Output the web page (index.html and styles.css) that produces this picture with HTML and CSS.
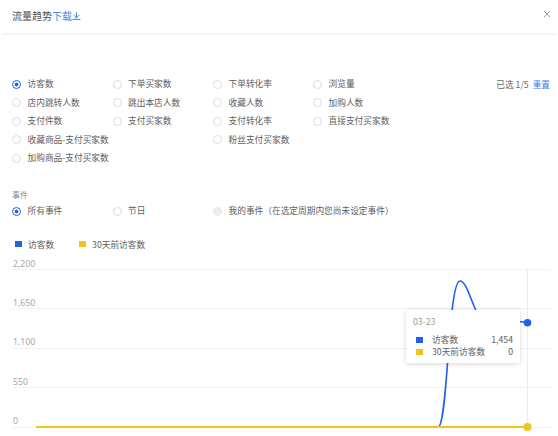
FILE: index.html
```html
<!DOCTYPE html>
<html lang="zh-CN">
<head>
<meta charset="utf-8">
<link rel="stylesheet" href="styles.css">
</head>
<body>
<div class="modal">
  <header class="hd">
    <span class="title">流量趋势</span>
    <a class="dl">下载<svg class="dl-ico" width="9" height="8" viewBox="0 0 9 8"><path d="M4.5 0.3V5.6M1.6 3L4.5 5.9L7.4 3M0.6 7.4H8.4" fill="none" stroke="#3f7ff0" stroke-width="1"/></svg></a>
    <svg class="close" width="8" height="8" viewBox="0 0 8 8"><path d="M1 1L7 7M7 1L1 7" stroke="#9a9a9a" stroke-width="1"/></svg>
  </header>

  <section class="metrics">
    <div class="grid">
      <label class="opt"><i class="rd on"></i>访客数</label>
      <label class="opt"><i class="rd"></i>下单买家数</label>
      <label class="opt"><i class="rd"></i>下单转化率</label>
      <label class="opt"><i class="rd"></i>浏览量</label>
      <label class="opt"><i class="rd"></i>店内跳转人数</label>
      <label class="opt"><i class="rd"></i>跳出本店人数</label>
      <label class="opt"><i class="rd"></i>收藏人数</label>
      <label class="opt"><i class="rd"></i>加购人数</label>
      <label class="opt"><i class="rd"></i>支付件数</label>
      <label class="opt"><i class="rd"></i>支付买家数</label>
      <label class="opt"><i class="rd"></i>支付转化率</label>
      <label class="opt"><i class="rd"></i>直接支付买家数</label>
      <label class="opt"><i class="rd"></i>收藏商品-支付买家数</label>
      <span></span>
      <label class="opt"><i class="rd"></i>粉丝支付买家数</label>
      <span></span>
      <label class="opt"><i class="rd"></i>加购商品-支付买家数</label>
    </div>
    <div class="sel">已选 1/5 <a class="reset">重置</a></div>
  </section>

  <section class="events">
    <div class="ev-label">事件</div>
    <div class="ev-row">
      <label class="opt"><i class="rd on"></i>所有事件</label>
      <label class="opt"><i class="rd"></i>节日</label>
      <label class="opt wide"><i class="rd dis"></i>我的事件（在选定周期内您尚未设定事件）</label>
    </div>
  </section>

  <div class="legend">
    <span class="lg"><i class="sq blue"></i>访客数</span>
    <span class="lg"><i class="sq yellow"></i>30天前访客数</span>
  </div>

  <div class="chart">
    <svg class="plot" width="558" height="184" viewBox="0 252 558 184">
      <g stroke="#f1f1f5" stroke-width="1">
        <line x1="13" y1="269.5" x2="550" y2="269.5"/>
        <line x1="13" y1="308.5" x2="550" y2="308.5"/>
        <line x1="13" y1="348.5" x2="550" y2="348.5"/>
        <line x1="13" y1="387.5" x2="550" y2="387.5"/>
        <line x1="13" y1="427.5" x2="550" y2="427.5"/>
      </g>
      <g class="ylab" fill="#a6a6a6">
        <text x="13" y="266.5">2,200</text>
        <text x="13" y="305.5">1,650</text>
        <text x="13" y="345">1,100</text>
        <text x="13" y="384.5">550</text>
        <text x="13" y="423.5">0</text>
      </g>
      <line x1="527.5" y1="269" x2="527.5" y2="427" stroke="#ececf0" stroke-width="1"/>
      <path d="M36 427H438C448 427 448 281 460 281C466 281 470 298 477 313C484 326 500 318 527.5 322.7" fill="none" stroke="#2160e8" stroke-width="1.6"/>
      <line x1="36" y1="427" x2="527.5" y2="427" stroke="#f0c419" stroke-width="2"/>
      <circle cx="527.5" cy="322.7" r="3.8" fill="#2160e8"/>
      <circle cx="527.5" cy="427" r="4" fill="#f0c419"/>
    </svg>
    <div class="tip">
      <div class="tip-date">03-23</div>
      <div class="tip-row"><i class="sq blue"></i><span class="tip-name">访客数</span><span class="tip-val">1,454</span></div>
      <div class="tip-row"><i class="sq yellow"></i><span class="tip-name">30天前访客数</span><span class="tip-val">0</span></div>
    </div>
  </div>
</div>
</body>
</html>
```

FILE: styles.css
```css
* { box-sizing: border-box; }
html, body {
  margin: 0;
  padding: 0;
  background: #fff;
}
body {
  width: 558px;
  height: 436px;
  overflow: hidden;
  font-family: "Noto Sans CJK SC", "Noto Sans", sans-serif;
  font-size: 8.7px;
  color: #606060;
}
.modal { width: 558px; }

.hd {
  height: 35px;
  margin: 0 3px 0 2px;
  padding: 0 4px 0 10px;
  border-bottom: 2px solid #f4f4f4;
  display: flex;
  align-items: center;
  font-size: 10px;
  line-height: 14px;
  padding-bottom: 2px;
}
.title { color: #4d4d4d; }
.dl {
  color: #3f7ff0;
  display: inline-flex;
  align-items: center;
}
.dl-ico { margin-left: 0; margin-top: 1px; }
.close { margin-left: auto; margin-top: -3px; }

.metrics {
  margin-top: 40px;
  display: flex;
  align-items: flex-start;
}
.grid {
  padding-left: 12px;
  display: grid;
  grid-template-columns: 100.5px 100.5px 100px 100px;
  grid-auto-rows: 18.5px;
}
.opt {
  display: flex;
  align-items: center;
  gap: 6.5px;
  white-space: nowrap;
  line-height: 12px;
}
.rd {
  width: 9px;
  height: 9px;
  flex: none;
  border: 1px solid #dcdcdc;
  border-radius: 50%;
  background: #fff;
}
.rd.on {
  border-color: #2160e8;
  background: radial-gradient(circle, #2160e8 0 1.7px, #fff 2.2px);
}
.rd.dis {
  background: #ededed;
  border-color: #e8e8e8;
}
.sel {
  margin-left: auto;
  padding-right: 8px;
  height: 18.5px;
  display: flex;
  align-items: center;
  gap: 3px;
  color: #666;
}
.reset { color: #3f7ff0; margin-left: 1px; }

.events { margin-top: 19.5px; }
.ev-label {
  height: 16px;
  padding-left: 12px;
  line-height: 16px;
  font-size: 8px;
  color: #8c8c8c;
}
.ev-row {
  height: 16px;
  padding-left: 12px;
  display: grid;
  grid-template-columns: 100.5px 100.5px auto;
  align-items: center;
}

.legend {
  margin-top: 17px;
  height: 16px;
  padding-left: 15px;
  display: flex;
  align-items: center;
  gap: 25px;
}
.lg {
  display: flex;
  align-items: center;
  gap: 6.5px;
}
.sq {
  width: 6.5px;
  height: 6.5px;
  flex: none;
  display: block;
}
.sq.blue { background: #2160e8; }
.sq.yellow { background: #f0c419; }

.chart {
  position: relative;
  height: 184px;
}
.plot { display: block; }
.ylab text {
  font-family: "Noto Sans", "Noto Sans CJK SC", sans-serif;
  font-size: 8.7px;
}
.tip {
  position: absolute;
  left: 406px;
  top: 58px;
  width: 113.5px;
  height: 53px;
  background: #fff;
  border-radius: 2px;
  box-shadow: 0 1px 5px rgba(0, 0, 0, 0.16);
  padding: 5px 6.5px 0 7px;
}
.tip-date {
  color: #9a9a9a;
  font-size: 8.7px;
  line-height: 13px;
  height: 13px;
  margin-bottom: 6px;
}
.tip-row {
  display: flex;
  align-items: center;
  height: 12px;
  line-height: 12px;
  padding-left: 3px;
}
.tip-row .sq { margin-right: 9.5px; }
.tip-val { margin-left: auto; }
```
